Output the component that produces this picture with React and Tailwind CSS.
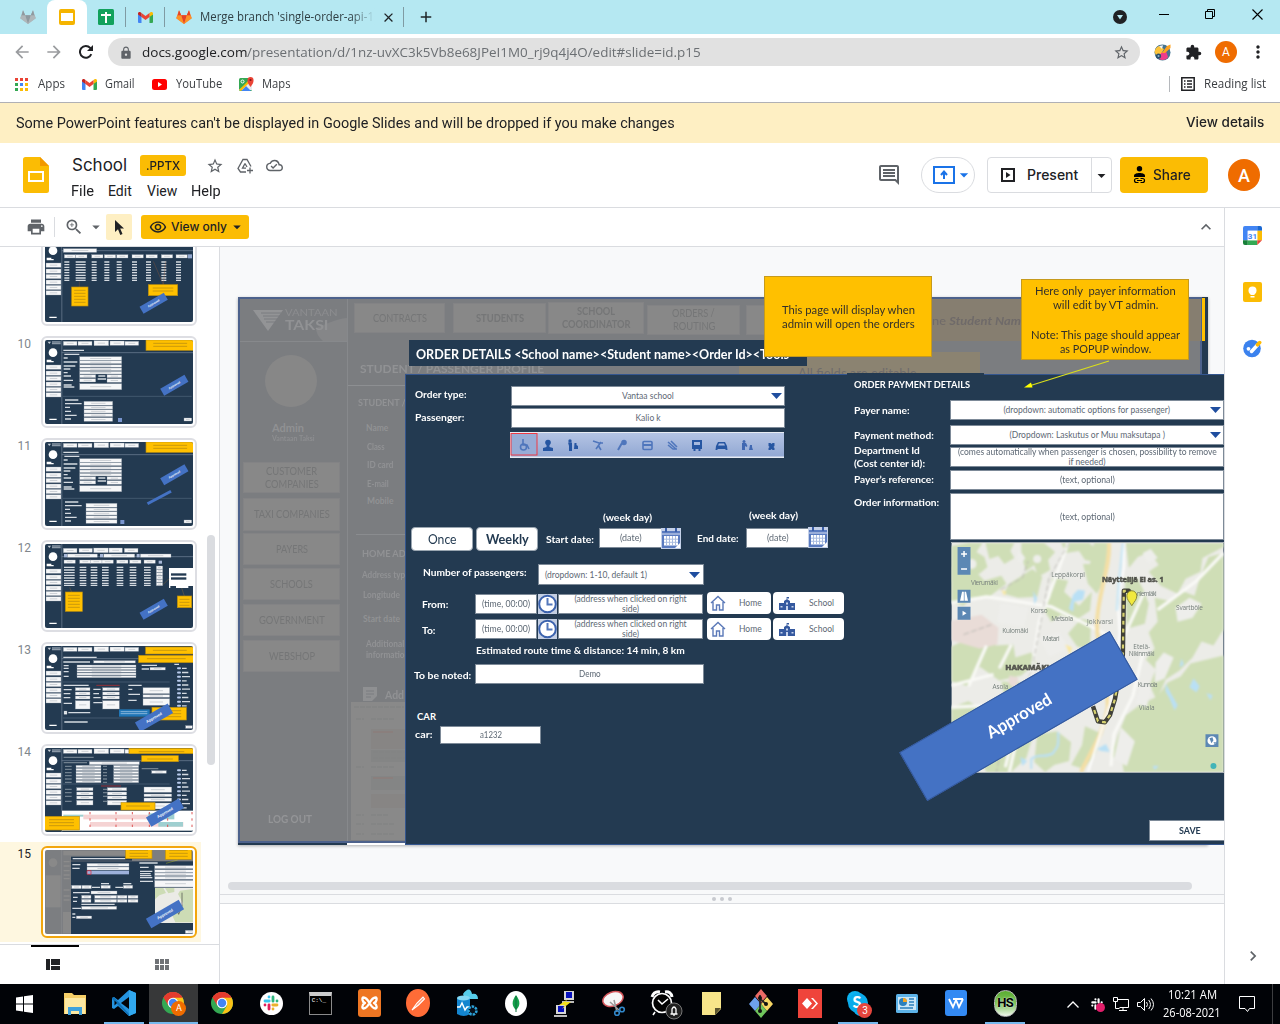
import React, { useLayoutEffect, useRef, useState } from "react";
import {
  MdPrint, MdZoomIn, MdArrowDropDown, MdOutlineRemoveRedEye, MdStarBorder,
  MdOutlineCloudDone, MdExtension, MdMoreVert, MdKeyboardArrowUp, MdLock,
  MdArrowBack, MdArrowForward, MdOutlineInsertComment, MdChevronRight, MdAdd, MdClose,
} from "react-icons/md";

/* A single line of text stretched or narrowed to an exact width. */
function Fit({ w, className = "", children }) {
  const ref = useRef(null);
  const [scale, setScale] = useState(1);
  useLayoutEffect(() => {
    const natural = ref.current.offsetWidth;
    if (natural) setScale(w / natural);
  }, [w]);
  return (
    <span className={"inline-block shrink-0 whitespace-nowrap " + className} style={{ width: w }}>
      <span ref={ref} className="inline-block origin-left whitespace-pre" style={{ transform: `scaleX(${scale})` }}>
        {children}
      </span>
    </span>
  );
}

/* Text object on the slide canvas, vertically centred on its top coordinate. */
function T({ w, className, children }) {
  return (
    <div className={"absolute flex -translate-y-1/2 leading-none " + className}>
      <Fit w={w}>{children}</Fit>
    </div>
  );
}

/* ---------- brand icons ---------- */

function Gitlab({ grey }) {
  const c = grey ? ["#8f9aa0", "#a5adb1", "#b4babd"] : ["#e24329", "#fc6d26", "#fca326"];
  return (
    <svg className="size-4 shrink-0" viewBox="0 0 16 16">
      <path d="M0.2 9.2 3 1.2l2.2 5h5.6l2.2-5 2.8 8L8 15z" fill={c[1]} />
      <path d="M5.2 6.2h5.6L8 15z" fill={c[0]} />
      <path d="M0.2 9.2 1.8 6.2h3.4L8 15zM15.8 9.2l-1.6-3h-3.4L8 15z" fill={c[2]} fillOpacity=".7" />
      <path d="M1.8 6.2 3 1.2l2.2 5zM14.2 6.2l-1.2-5-2.2 5z" fill={c[0]} />
    </svg>
  );
}

function Gmail() {
  return (
    <svg className="h-[11px] w-[15px]" viewBox="0 0 15 11">
      <path d="M0 2v8a1 1 0 0 0 1 1h2.500V4z" fill="#4285f4" />
      <path d="M15 2v8a1 1 0 0 1-1 1h-2.500V4z" fill="#34a853" />
      <path d="M11.500 1v4L15 2.600V1.500C15 .2 13.500-.4 12.500.3z" fill="#fbbc04" />
      <path d="M3.500 5V1l4 3 4-3v4l-4 3z" fill="#ea4335" />
      <path d="M0 1.500v1.100L3.500 5V1L2.500.3C1.500-.4 0 .2 0 1.500z" fill="#c5221f" />
    </svg>
  );
}

function ChromeLogo() {
  return (
    <svg className="size-6" viewBox="0 0 24 24">
      <circle cx="12" cy="12" r="11" fill="#34a853" />
      <path d="M12 12 2.500 6.500A11 11 0 0 1 21.500 6.500z" fill="#ea4335" />
      <path d="M12 6.500h9.500A11 11 0 0 1 12 23l5-8.500z" fill="#fbc116" />
      <path d="M2.500 6.500A11 11 0 0 1 21.500 6.500H12L7.200 14.500z" fill="#e33b2e" />
      <circle cx="12" cy="12" r="5.300" fill="#fff" />
      <circle cx="12" cy="12" r="4.200" fill="#4285f4" />
    </svg>
  );
}

/* Four rounded bars with their four satellite dots. */
function SlackMark({ className, mono }) {
  const c = mono ? ["#fff", "#fff", "#fff", "#fff"] : ["#36c5f0", "#2eb67d", "#ecb22e", "#e01e5a"];
  return (
    <svg className={className} viewBox="0 0 18 18" strokeWidth="2.800" strokeLinecap="round" fill="none">
      <path d="M3 7h4.200M7 3h.01" stroke={c[0]} />
      <path d="M11 3v4.200M15 7h.01" stroke={c[1]} />
      <path d="M15 11h-4.200M11 15h.01" stroke={c[2]} />
      <path d="M7 15v-4.200M3 11h.01" stroke={c[3]} />
    </svg>
  );
}

/* ---------- browser chrome ---------- */

function TabStrip() {
  return (
    <div className="flex h-[34px] items-stretch bg-[#b5e8f2]">
      <div className="flex w-[47px] items-center justify-center pl-[9px]"><Gitlab grey /></div>
      <div className="flex w-10 items-center justify-center rounded-t-lg bg-white">
        <div className="size-4 rounded-[2px] bg-[#f5b400] px-[2px] py-[4px]"><div className="h-2 w-3 bg-white" /></div>
      </div>
      <div className="flex w-[38px] items-center justify-center">
        <svg className="size-4" viewBox="0 0 16 16">
          <rect width="16" height="16" rx="1.500" fill="#12a15c" />
          <path d="M3 6h10M8 3v11" stroke="#fff" strokeWidth="2" />
        </svg>
      </div>
      <div className="my-[7px] w-px bg-[#7f9ba3]" />
      <div className="flex w-[38px] items-center justify-center"><Gmail /></div>
      <div className="my-[7px] w-px bg-[#7f9ba3]" />
      <div className="flex w-[238px] items-center pl-[11px]">
        <Gitlab />
        <div className="relative ml-[8px] flex w-[175px] font-['Open_Sans'] text-[12px] text-[#2f3e43]">
          <Fit w={174}>Merge branch 'single-order-api-1</Fit>
          <div className="absolute inset-y-0 right-0 w-[24px] bg-gradient-to-r from-transparent to-[#b5e8f2]" />
        </div>
        <MdClose className="ml-[6px] size-[15px] text-[#1f2427]" />
      </div>
      <div className="my-[7px] w-px bg-[#7f9ba3]" />
      <div className="flex w-[44px] items-center justify-center"><MdAdd className="size-[18px] text-[#1f2427]" /></div>
      <div className="flex-1" />
      <div className="flex items-center pb-[6px]">
        <svg className="mt-[6px] mr-[32px] size-[14px]" viewBox="0 0 14 14"><circle cx="7" cy="7" r="7" fill="#202124" /><path d="M4 5h6L7 9.500z" fill="#b5e8f2" /></svg>
        <svg className="mr-[36px] h-3 w-[10px]" viewBox="0 0 10 12"><path d="M0 6.500h10" stroke="#000" /></svg>
        <svg className="mr-[37px] size-[10px]" viewBox="0 0 10 10" fill="none" stroke="#000"><path d="M.5 2.500h7v7h-7zM2.500 2.500v-2h7v7h-2" /></svg>
        <svg className="mr-[17px] size-[11px]" viewBox="0 0 11 11"><path d="M.5.5l10 10M10.500.5l-10 10" stroke="#000" strokeWidth="1.100" /></svg>
      </div>
    </div>
  );
}

function AddressBar() {
  return (
    <div className="flex h-9 items-center font-['Open_Sans']">
      <MdArrowBack className="ml-[12px] size-5 text-[#9a9c9f]" />
      <MdArrowForward className="ml-[12px] size-5 text-[#9a9c9f]" />
      <svg className="ml-[15px] size-[14px]" viewBox="0 0 14 14"><path d="M12.300 9.200A5.900 5.900 0 1 1 11.200 2.900L12 3.800" fill="none" stroke="#202124" strokeWidth="2" /><path d="M14 0v6H8z" fill="#202124" /></svg>
      <div className="ml-[15px] flex h-7 w-[1032px] items-center rounded-full bg-[#e1e1e1] pt-px pr-[10px] pl-[11px] text-[13px]">
        <MdLock className="size-[14px] text-[#5f6368]" />
        <Fit w={105} className="ml-[9px] text-[#202124]">docs.google.com</Fit>
        <Fit w={454} className="text-[#6b6f73]">/presentation/d/1nz-uvXC3k5Vb8e68JPeI1M0_rj9q4j4O/edit#slide=id.p15</Fit>
        <div className="flex-1" />
        <MdStarBorder className="size-[17px] text-[#5f6368]" />
      </div>
      <svg className="ml-[14px] size-[17px]" viewBox="0 0 17 17">
        <circle cx="8.500" cy="8.500" r="8" fill="#467591" />
        <path d="M1 7C1 4 4 1 7 1l4 4-4 4z" fill="#3f6c8c" /><path d="M.5 8C1 5 3 2.500 5 2l5 3-3 5-5 1z" fill="#fdc43a" /><path d="M5 2 9 1.200 8 5z" fill="#f4f4f4" />
        <path d="M7 9l5-2 2 6c-1 2-4 3.500-6 3l-3-1z" fill="#ee3d8b" /><circle cx="4.500" cy="12" r="2.600" fill="#29506b" /><circle cx="4.500" cy="12" r="1" fill="#8fb2c8" />
        <path d="m8 9 5-7 3.500-1.500V4L11 9z" fill="#ffa21f" />
      </svg>
      <MdExtension className="ml-[14px] size-[17px] text-[#202124]" />
      <div className="ml-[13px] flex size-[22px] items-center justify-center rounded-full bg-[#ef6c00] font-[Roboto] text-[12px] text-white">A</div>
      <MdMoreVert className="ml-[11px] size-[20px] text-[#202124]" />
    </div>
  );
}

function Bookmarks() {
  const dots = ["bg-[#ea4335]", "bg-[#ea4335]", "bg-[#ea4335]", "bg-[#34a853]", "bg-[#4285f4]", "bg-[#fbbc04]", "bg-[#34a853]", "bg-[#fbbc04]", "bg-[#fbbc04]"];
  return (
    <div className="flex h-8 items-center border-b border-[#b0b0b5] pb-[5px] font-['Open_Sans'] text-[12px] text-[#3a3d41]">
      <div className="ml-[15px] grid grid-cols-3 gap-[2px]">{dots.map((c, i) => <i key={i} className={"size-[3px] " + c} />)}</div>
      <Fit w={27} className="ml-[10px]">Apps</Fit>
      <div className="ml-[17px] flex"><Gmail /></div>
      <Fit w={30} className="ml-[8px]">Gmail</Fit>
      <svg className="ml-[17px] h-[11px] w-[15px]" viewBox="0 0 15 11"><rect width="15" height="11" rx="2.500" fill="#f00" /><path d="M6 3v5l4-2.500z" fill="#fff" /></svg>
      <Fit w={46} className="ml-[9px]">YouTube</Fit>
      <svg className="ml-[17px] size-[15px]" viewBox="0 0 15 15">
        <rect y="1" width="13" height="13" rx="1.500" fill="#34a853" /><path d="M0 13 13 2v11z" fill="#e8eaed" />
        <path d="M2 14 7 9l5 5z" fill="#4285f4" /><path d="M0 13 9 4l1.500 1.500L2 14z" fill="#fbbc04" />
        <circle cx="3.500" cy="4.500" r="1.500" fill="none" stroke="#fff" />
        <path d="M11.500 10C9 6.500 8.500 5.500 8.500 3a3 3 0 0 1 6 0c0 2.500-.5 3.500-3 7z" fill="#ea4335" /><circle cx="11.500" cy="3" r="1.100" fill="#811" />
      </svg>
      <Fit w={29} className="ml-[8px]">Maps</Fit>
      <div className="flex-1" />
      <div className="h-4 w-px bg-[#b5b8bc]" />
      <svg className="ml-[11px] size-[14px]" viewBox="0 0 14 14" stroke="#202124" strokeWidth="1.500" fill="none"><path d="M.8.8h12.400v12.400H.8zM3 4h1.500M6 4h5M3 7h1.500M6 7h5M3 10h1.500M6 10h5" /></svg>
      <Fit w={62} className="mr-[14px] ml-[9px]">Reading list</Fit>
    </div>
  );
}

/* ---------- Slides header ---------- */

function Header() {
  return (
    <header className="flex h-[65px] border-b border-[#dadce0]">
      <svg className="mt-[14px] ml-[23px] h-9 w-[26px]" viewBox="0 0 26 36">
        <path d="M2.500 0H17l9 9v24.500a2.500 2.500 0 0 1-2.500 2.500h-21A2.500 2.500 0 0 1 0 33.500v-31A2.500 2.500 0 0 1 2.500 0z" fill="#fbbc04" />
        <path d="M17 0l9 9h-9z" fill="#f29900" /><path d="M6 15h14v9H6z" fill="none" stroke="#fff" strokeWidth="2" />
      </svg>
      <div className="ml-[22px] w-[231px]">
        <div className="mt-[11px] flex h-[23px] items-center pl-px">
          <Fit w={55} className="font-[Inter] text-[17px] text-[#202124]">School</Fit>
          <div className="ml-[13px] flex h-[21px] w-[46px] items-center justify-center rounded-[3px] bg-[#fbbc04] font-[Inter] text-[12px] font-medium text-[#202124]"><Fit w={34}>.PPTX</Fit></div>
          <MdStarBorder className="ml-[20px] size-[18px] text-[#5f6368]" />
          <svg className="ml-[13px] size-[16px]" viewBox="0 0 16 16" fill="none" stroke="#5f6368" strokeWidth="1.300">
            <path d="M9 14H3.500L1 10.500 6 1.500h4l4 7" /><path d="M8 5.500 5.500 10.200H9M8 5.500l2 3.500" /><path d="M13 9.500v6M10 12.500h6" />
          </svg>
          <MdOutlineCloudDone className="ml-[13px] size-[17px] text-[#5f6368]" />
        </div>
        <div className="mt-[3px] flex h-[22px] items-center font-[Roboto] text-[14px] text-[#202124]">
          <Fit w={23}>File</Fit><Fit w={24} className="ml-[14px]">Edit</Fit><Fit w={30} className="ml-[15px]">View</Fit><Fit w={30} className="ml-[14px]">Help</Fit>
        </div>
      </div>
      <div className="flex-1" />
      <div className="flex h-16 items-center font-[Inter] text-[14px] font-medium text-[#202124]">
        <MdOutlineInsertComment className="size-6 text-[#5f6368]" />
        <div className="ml-[20px] flex h-9 w-[54px] items-center justify-center rounded-full border border-[#dadce0] pl-[10px] text-[#1a73e8]">
          <svg className="h-[18px] w-[22px] shrink-0" viewBox="0 0 22 18" fill="none" stroke="#1a73e8" strokeWidth="2"><path d="M1 1h20v16H1zM11 13V6M8 9l3-3.500L14 9" /></svg>
          <MdArrowDropDown className="-ml-px size-[20px] shrink-0" />
        </div>
        <div className="ml-[12px] flex h-9 rounded-[4px] border border-[#dadce0]">
          <div className="flex w-[103px] items-center">
            <svg className="ml-[13px] size-[14px]" viewBox="0 0 14 14"><path d="M1 1h12v12H1z" fill="none" stroke="#202124" strokeWidth="2" /><path d="M5 4v6l4.500-3z" fill="#202124" /></svg>
            <Fit w={51} className="mb-[2px] ml-[12px]">Present</Fit>
          </div>
          <div className="flex w-[20px] items-center justify-center border-l border-[#dadce0]"><MdArrowDropDown className="size-[19px] shrink-0" /></div>
        </div>
        <div className="ml-[8px] flex h-9 w-[88px] items-center rounded-[4px] bg-[#fbbc04]">
          <svg className="ml-[13px] h-[18px] w-[13px]" viewBox="0 0 13 18"><circle cx="6.500" cy="2.800" r="2.700" /><path d="M1 11V9.500C1 6 12 6 12 9.500V11z" /><path d="M5.500 12.500h-2a2 2 0 0 0 0 4h2M7.500 12.500h2a2 2 0 0 1 0 4h-2M4 14.500h5" fill="none" stroke="#000" strokeWidth="1.200" /></svg>
          <Fit w={38} className="mb-[2px] ml-[7px]">Share</Fit>
        </div>
        <div className="mr-[20px] ml-[20px] flex size-8 items-center justify-center rounded-full bg-[#ef6c00] font-[Roboto] text-[18px] text-white">A</div>
      </div>
    </header>
  );
}

function Toolbar() {
  return (
    <div className="flex h-[39px] items-center border-b border-[#dadce0] bg-white">
      <MdPrint className="ml-[26px] size-5 text-[#5f6368]" />
      <div className="ml-[8px] h-5 w-px bg-[#dadce0]" />
      <MdZoomIn className="ml-[9px] size-[20px] text-[#5f6368]" />
      <MdArrowDropDown className="ml-[3px] size-[18px] text-[#5f6368]" />
      <div className="ml-[1px] flex size-[26px] items-center justify-center rounded-[2px] bg-[#feefc3]">
        <svg className="h-[15px] w-[11px]" viewBox="0 0 11 15"><path d="M1 0v12l3-2.800L6.300 15l2.200-1L6.200 8.500H10z" fill="#202124" /></svg>
      </div>
      <div className="ml-[9px] flex h-6 w-[108px] items-center rounded-[3px] bg-[#fbbc04] font-[Inter] text-[12px] font-medium text-[#202124]">
        <MdOutlineRemoveRedEye className="ml-[8px] size-[18px]" />
        <Fit w={56} className="ml-[4px]">View only</Fit>
        <MdArrowDropDown className="ml-[1px] size-[18px]" />
      </div>
      <div className="flex-1" />
      <MdKeyboardArrowUp className="mr-[8px] size-5 text-[#5f6368]" />
    </div>
  );
}

/* ---------- filmstrip ---------- */

const NAVY = "#233a51";
const Rects = ({ list, fill = "#fff" }) => list.map(([x, y, w, h], i) => <rect key={i} x={x} y={y} width={w} height={h} fill={fill} />);
const Lines = ({ list, stroke = "#d5dbe1", sw = 4 }) => list.map(([x, y, w], i) => <path key={i} d={`M${x} ${y}h${w}`} stroke={stroke} strokeWidth={sw} />);
const Fields = ({ list }) => (
  <>
    {list.map(([x, y, w, h], i) => (
      <g key={i}><rect x={x} y={y} width={w} height={h} fill="#f6f7f8" stroke="#8995a3" /><path d={`M${x + w * 0.25} ${y + h / 2}h${w * 0.5}`} stroke="#b9bfc6" strokeWidth="2" /></g>
    ))}
  </>
);
const Note = ({ x, y, w, h }) => (
  <g>
    <rect x={x} y={y} width={w} height={h} fill="#ffc000" stroke="#b98d10" strokeWidth="2" />
    {Array.from({ length: Math.max(1, Math.floor((h - 8) / 9)) }, (_, i) => <path key={i} d={`M${x + w * 0.15} ${y + 10 + i * 9}h${w * 0.7}`} stroke="#b08510" strokeWidth="2" />)}
  </g>
);
const Stamp = ({ x, y, s = 1 }) => (
  <g transform={`translate(${x} ${y}) rotate(-30) scale(${s})`}>
    <rect x="-42" y="-12" width="84" height="24" fill="#4472c4" />
    <text textAnchor="middle" y="3" fontFamily="Lato" fontWeight="700" fontSize="9" fill="#fff">Approved</text>
  </g>
);

function ThumbFrame({ children, tabs = true }) {
  return (
    <>
      <rect width="444" height="252" fill={NAVY} />
      <path d="M50.500 0v252M50 38h394" stroke="#75879a" strokeWidth="2" />
      <path d="M8 5h10l-5 7z" fill="#c8d0d8" /><Lines list={[[21, 6, 26], [21, 11, 26]]} stroke="#8b99a7" />
      <circle cx="24" cy="38" r="13" fill="#fff" />
      <Lines list={[[5, 61, 14], [5, 65, 21], [13, 238, 22]]} stroke="#fff" />
      <Fields list={[75, 93, 109, 126, 142, 158].map((y) => [3, y, 45, 13])} />
      {tabs && <Fields list={[[55, 4, 41, 12], [99, 4, 42, 12], [147, 2, 44, 15], [195, 3, 43, 13], [240, 4, 41, 12]]} />}
      {children}
    </>
  );
}

function Thumb9() {
  const cols = [58, 92, 140, 178, 215, 261, 303, 349, 393];
  return (
    <ThumbFrame tabs={false}>
      <rect x="52" y="0" width="392" height="36" fill={NAVY} />
      <Fields list={[[55, 32, 100, 11], ...cols.map((x) => [x, 50, 34, 10])]} />
      <Rects list={[[429, 49, 12, 12]]} fill="#93a8cf" />
      {cols.map((x, c) => <Lines key={c} list={[72, 80, 88, 96, 104, 112, 120, 127].map((y) => [x, y, c === 1 ? 30 : 15])} />)}
      <path d="M103 130v20M325 70l30 70M362 70l-7 70" stroke="#9b5b36" fill="none" />
      <Note x={80} y={147} w={49} h={57} /><Note x={310} y={140} w={88} h={33} /><Stamp x={326} y={196} />
    </ThumbFrame>
  );
}

function Thumb10({ alt }) {
  return (
    <ThumbFrame>
      <Lines list={[[55, 31, alt ? 46 : 62], [58, 43, 45]]} />
      <Lines list={[54, 66, 78, 87, 98, 108, 121, 135, 141].map((y, i) => [56, y, [12, 41, 35, 20, 12, 22, 28, 24, 32][i]])} />
      <Fields list={[[104, 50, 126, 11], [104, 62, 126, 9], [104, 74, 126, 8], [104, 84, 126, 8], [104, 94, 126, 8], [104, 104, 48, 9], [104, 116, 48, 10], [186, 104, 44, 9], [186, 116, 44, 11], [104, 131, 126, 18]]} />
      <Lines list={[[160, 108, 21], [158, 117, 25]]} />
      <path d="M54 169h386" stroke="#52677c" strokeWidth="2" />
      <Lines list={[[60, 180, 40], [60, 191, 50], [60, 202, 15], [60, 214, 18], [60, 226, 35], [60, 237, 18]]} />
      <Fields list={alt ? [[123, 184, 93, 12], [123, 198, 93, 9], [123, 209, 93, 10], [123, 221, 93, 9], [123, 233, 93, 11]] : [[117, 184, 86, 12], [117, 198, 86, 9], [117, 209, 86, 10], [117, 221, 86, 9], [117, 233, 86, 11]]} />
      <Rects list={[[alt ? 226 : 219, 234, 12, 12]]} fill="#7894ce" /><Fields list={[[417, 234, 23, 9]]} />
      <Note x={303} y={0} w={145} h={31} /><Stamp x={388} y={alt ? 98 : 136} />
      {alt && <g transform="translate(343 167) rotate(-28)"><rect x="-40" y="-5" width="80" height="9" fill="#4472c4" /></g>}
    </ThumbFrame>
  );
}

function Thumb12() {
  const cols = [57, 104, 137, 171, 215, 254, 297];
  return (
    <ThumbFrame tabs={false}>
      <Fields list={[[55, 13, 41, 13], [102, 13, 40, 12], [146, 12, 44, 14], [192, 12, 40, 14], [238, 13, 41, 12], [67, 30, 90, 10], [176, 30, 93, 10], [286, 30, 92, 10], ...cols.map((x) => [x, 48, 34, 10])]} />
      <Rects list={[[57, 30, 9, 10], [165, 30, 9, 10], [275, 30, 9, 10], [341, 50, 10, 9]]} fill="#a8b8d8" />
      {cols.map((x, c) => <Lines key={c} list={[70, 78, 86, 94, 102, 110, 118, 124].map((y) => [x, y, c ? 20 : 32])} />)}
      <Fields list={[66, 76, 86, 96, 106, 116].map((y) => [334, y, 19, 9])} />
      <Rects list={[[372, 72, 72, 60]]} /><Rects list={[[378, 88, 46, 7], [378, 100, 46, 7], [376, 126, 17, 6], [430, 126, 14, 6]]} fill={NAVY} />
      <path d="M74 130l6 15M410 132l8 24M354 122l18-18" stroke="#a47935" />
      <Note x={61} y={144} w={51} h={58} /><Note x={397} y={156} w={43} h={35} /><Stamp x={326} y={196} />
    </ThumbFrame>
  );
}

function Toggles() {
  return Array.from({ length: 10 }, (_, i) => (
    <g key={i}><rect x="396" y={64 + i * 12.5} width="12" height="6" rx="3" fill="#b9cbed" /><Lines list={[[411, 67 + i * 12.5, 14 + (i % 3) * 5]]} /></g>
  ));
}

function Thumb13() {
  return (
    <ThumbFrame>
      <Lines list={[[55, 34, 100], [55, 48, 80], [388, 55, 14]]} />
      <Fields list={[[146, 44, 125, 7], [96, 57, 177, 6], [96, 65, 177, 6], [96, 73, 177, 6], [96, 81, 177, 6], [96, 89, 177, 6]]} />
      <Lines list={[59, 67, 77, 91].map((y) => [56, y, 15])} />
      <Lines list={[[290, 58, 46], [290, 69, 22]]} /><Fields list={[[315, 64, 46, 8]]} />
      <path d="M54 108h320M54 216h355" stroke="#52677c" strokeWidth="2" />
      <Lines list={[[56, 118, 75], [250, 118, 40], [56, 131, 24], [56, 143, 20], [56, 155, 20], [56, 172, 25], [145, 130, 22], [145, 143, 17], [145, 155, 22], [145, 170, 28], [250, 130, 12], [250, 145, 35], [250, 163, 25], [70, 200, 66], [58, 228, 70]]} />
      <path d="M154 118h70" stroke="#d02a2a" strokeWidth="2" />
      <Fields list={[[91, 125, 44, 9], [91, 138, 44, 9], [91, 150, 44, 9], [91, 164, 44, 25], [173, 125, 50, 9], [173, 138, 50, 9], [173, 150, 50, 9], [173, 164, 50, 25], [294, 125, 80, 18], [294, 146, 80, 8], [294, 158, 80, 20], [57, 195, 9, 10], [422, 239, 20, 8]]} />
      <Toggles />
      <rect x="222" y="190" width="92" height="22" fill="#2076b7" /><Lines list={[[227, 197, 80], [227, 203, 80]]} stroke="#b9d4eb" sw={2} />
      <Note x={302} y={3} w={145} h={21} /><Note x={281} y={28} w={166} h={22} /><Note x={321} y={184} w={103} h={38} /><Stamp x={327} y={215} s={1.35} />
    </ThumbFrame>
  );
}

function Thumb14() {
  return (
    <ThumbFrame>
      <Lines list={[[56, 28, 90], [56, 44, 70], [290, 62, 50]]} stroke="#71818f" />
      <Fields list={[[133, 41, 150, 9], ...[52, 61, 70, 79, 88, 97].flatMap((y) => [[93, y, 75, 7], [206, y, 75, 7]]), ...[119, 132, 144].flatMap((y) => [[95, y, 49, 9], [187, y, 58, 9]]), [95, 157, 49, 14], [187, 157, 58, 14], [297, 117, 83, 16], [297, 138, 83, 8], [297, 150, 83, 10], [297, 165, 83, 18], [320, 68, 44, 8]]} />
      <Lines list={[55, 64, 74, 83, 93, 103, 124, 134, 145, 160].flatMap((y) => [[60, y, 20], [174, y, 12]])} stroke="#71818f" />
      <path d="M54 108h320" stroke="#52677c" strokeWidth="2" /><path d="M168 114h60" stroke="#d02a2a" strokeWidth="2" /><Toggles />
      <rect x="51" y="188" width="393" height="60" fill="#fff" /><Rects list={[[115, 200, 215, 14], [135, 222, 280, 14]]} fill="#f5d3d3" />
      <Rects list={[[310, 196, 78, 18], [55, 200, 60, 6], [340, 222, 74, 14]]} fill="#9fcfd0" />
      <path d="M135 192v56M213 192v56M262 192v56M313 192v56M368 192v56M441 192v56" stroke="#d55" strokeWidth="3" strokeDasharray="7 12" />
      <Note x={252} y={1} w={195} h={16} /><Note x={290} y={23} w={110} h={18} /><Note x={228} y={164} w={102} h={22} /><Note x={-4} y={205} w={107} h={41} /><Stamp x={360} y={194} s={1.35} />
    </ThumbFrame>
  );
}

function Thumb15() {
  return (
    <>
      <rect width="444" height="252" fill="#7c7e81" />
      <Rects list={[[2, 76, 45, 96], [55, 3, 188, 13], [54, 186, 24, 64]]} fill="#898989" /><circle cx="24" cy="38" r="13" fill="#898989" />
      <path d="M50 0v252" stroke="#8b8d90" strokeWidth="2" />
      <Lines list={[35, 48, 62, 75, 86, 120, 138, 150].map((y) => [56, y, 18])} stroke="#8b8b8b" />
      <rect x="78" y="20" width="183" height="12" fill={NAVY} /><rect x="78" y="34" width="366" height="218" fill={NAVY} />
      <Lines list={[[83, 26, 158], [82, 44, 24], [82, 55, 22], [168, 101, 24], [235, 101, 24], [141, 112, 24], [211, 112, 23], [84, 128, 50], [84, 142, 14], [84, 154, 12], [109, 163, 100], [82, 175, 27], [82, 192, 9], [82, 202, 9], [283, 39, 55], [285, 52, 26], [285, 64, 37], [285, 71, 32], [285, 77, 34], [285, 83, 37], [285, 94, 39]]} />
      <Fields list={[[126, 40, 126, 9], [126, 51, 126, 9], [80, 106, 29, 10], [111, 106, 28, 10], [168, 106, 28, 9], [235, 106, 28, 9], [138, 123, 78, 9], [110, 136, 28, 9], [149, 136, 66, 9], [217, 136, 29, 9], [249, 136, 30, 9], [110, 148, 28, 9], [149, 148, 66, 9], [217, 148, 29, 9], [249, 148, 30, 9], [110, 169, 105, 9], [94, 198, 46, 8], [329, 47, 125, 9], [329, 59, 125, 9], [329, 69, 125, 8], [329, 79, 125, 9], [329, 91, 125, 20], [421, 241, 30, 9]]} />
      <rect x="126" y="62" width="126" height="11" fill="#9db0da" /><path d="M126 62h12v11h-12z" fill="none" stroke="#d23" strokeWidth="2" />
      <rect x="330" y="113" width="114" height="106" fill="#ebebe6" /><path d="M330 114h25l8 15-20 7-13 12zM360 114h28v12l-18 4zM405 122l39-5v100h-53l-11-25 35-30-16-30zM338 194l25-10 4 20-25 6z" fill="#cddcb5" />
      <path d="M411 128v40l-10 25-5-12" fill="none" stroke="#444" strokeWidth="2" />
      <Note x={242} y={-9} w={79} h={35} /><Note x={361} y={-9} w={79} h={37} /><path d="M398 30l-35 10" stroke="#dd0" /><Stamp x={360} y={192} s={1.35} />
    </>
  );
}

function Film({ n, active, children }) {
  return (
    <div className={"flex h-[102px] shrink-0 items-start " + (active ? "bg-[linear-gradient(#fef7e0,#fef7e0)] bg-[length:201px_100px] bg-no-repeat" : "")}>
      <div className={"w-[41px] pt-[3px] pr-[10px] text-right font-[Roboto] text-[12px] " + (active ? "text-[#202124]" : "text-[#80868b]")}>{n}</div>
      <div className={"mt-[4px] rounded-[6px] border-2 bg-white p-[2px] " + (active ? "border-[#f2a60d]" : "border-[#dddee3]")}>
        <svg className="block h-[84px] w-[148px] rounded-[2px]" viewBox="0 0 444 252" preserveAspectRatio="none">{children}</svg>
      </div>
    </div>
  );
}

function Filmstrip() {
  return (
    <aside className="flex h-[737px] w-[220px] shrink-0 flex-col border-r border-[#dadce0] bg-white">
      <div className="flex h-[697px]">
        <div className="flex w-[201px] flex-col justify-end overflow-hidden">
          <Film n=""><Thumb9 /></Film>
          <Film n="10"><Thumb10 /></Film>
          <Film n="11"><Thumb10 alt /></Film>
          <Film n="12"><Thumb12 /></Film>
          <Film n="13"><Thumb13 /></Film>
          <Film n="14"><Thumb14 /></Film>
          <Film n="15" active><Thumb15 /></Film>
        </div>
        <div className="mt-[288px] ml-[6px] h-[230px] w-2 rounded-full bg-[#dadce0]" />
      </div>
      <div className="flex h-10 border-t border-[#dadce0]">
        <div className="ml-[31px] flex w-12 flex-col border-t-2 border-black pt-[12px] pl-[15px]">
          <svg className="h-[11px] w-[14px]" viewBox="0 0 14 11" fill="#202124"><path d="M0 0h4v11H0zM5 0h9v6H5zM5 7h9v4H5z" /></svg>
        </div>
        <svg className="mt-[14px] ml-[76px] h-[11px] w-[14px]" viewBox="0 0 14 11" fill="#6f7276"><path d="M0 0h4v5H0zM5 0h4v5H5zM10 0h4v5h-4zM0 6h4v5H0zM5 6h4v5H5zM10 6h4v5h-4z" /></svg>
      </div>
    </aside>
  );
}

/* ---------- slide canvas ---------- */

function Field({ className, children }) {
  return <div className={"absolute flex flex-col items-center justify-center overflow-hidden border border-[#7d8a98] bg-white text-[8.5px] leading-[10px] text-[#5d6874] " + className}>{children}</div>;
}
function Dim({ className, children }) {
  return <div className={"absolute flex flex-col items-center justify-center border border-[#838385] bg-[#888888] text-[10.5px] leading-[13px] text-[#757677] " + className}>{children}</div>;
}
function Caret({ className }) {
  return <svg className={"absolute h-[6px] w-[11px] " + className} viewBox="0 0 11 6"><path d="M0 0h11L5.500 6z" fill="#1f4e9f" /></svg>;
}
function Calendar({ className }) {
  return (
    <svg className={"absolute h-[21px] w-5 " + className} viewBox="0 0 20 21">
      <rect width="20" height="21" fill="#c4d0e8" /><path d="M1 3h18v17H1z" fill="#5a7bc0" /><path d="M3 8h14v9.500H3z" fill="#fff" />
      <path d="M5 0v4M15 0v4" stroke="#3b5ea8" strokeWidth="2" /><path d="M1 6h18" stroke="#dbe3f2" />
      <path d="M5.500 8v9.500M8.500 8v9.500M11.500 8v9.500M14.500 8v9.500M3 11.200h14M3 14.300h14" stroke="#a9bce0" /><path d="M14 20l5-5v5z" fill="#fff" />
    </svg>
  );
}
function Clock({ className }) {
  return <svg className={"absolute h-5 w-[19px] " + className} viewBox="0 0 19 20"><rect width="19" height="20" fill="#c3cee2" /><circle cx="9.500" cy="10" r="8.300" fill="#fff" stroke="#3b62ad" strokeWidth="2" /><path d="M9.500 4v6.500h5" fill="none" stroke="#5478bb" strokeWidth="2" /></svg>;
}
function PlaceButtons({ className }) {
  return (
    <div className={"absolute flex gap-[2px] text-[8.5px] text-[#5d6874] " + className}>
      <div className="flex h-[22px] w-[64px] items-center rounded-[4px] bg-white pl-[3px]">
        <svg className="size-[16px]" viewBox="0 0 16 16" fill="none" stroke="#5b79b8" strokeWidth="1.400"><path d="M1 8 8 1.500 15 8M3 7v8h3.500v-5h3v5H13V7" /></svg>
        <Fit w={23} className="ml-[13px]">Home</Fit>
      </div>
      <div className="flex h-[22px] w-[71px] items-center rounded-[4px] bg-white pl-[6px]">
        <svg className="h-[13px] w-[16px]" viewBox="0 0 16 13" fill="#35599f"><path d="M0 6h5v7H0zM11 6h5v7h-5zM5 4l3-2 3 2v9H5zM7.600 0h2.400v1.500H8.100V3h-.5z" /><path d="M7 9h2v4H7zM7 5.500h2v2H7zM1.500 9h2v1.500h-2zM12.500 9h2v1.500h-2z" fill="#c7d3ec" /></svg>
        <Fit w={25} className="ml-[14px]">School</Fit>
      </div>
    </div>
  );
}

function MobilityIcons() {
  return (
    <svg className="absolute top-[432px] left-[510px] h-[26px] w-[274px]" viewBox="0 0 274 26">
      <defs><linearGradient id="strip" x1="0" y1="0" x2="0" y2="1"><stop offset="0" stopColor="#b4c4e4" /><stop offset="1" stopColor="#92a8d3" /></linearGradient><filter id="faint"><feGaussianBlur stdDeviation="0.6" /></filter></defs>
      <rect width="274" height="26" fill="#e6ebf3" /><rect x="1" y="1" width="273" height="23.500" fill="url(#strip)" />
      <rect x="1" y="1.500" width="26" height="21.500" fill="#97acd6" stroke="#ee3a44" />
      <g filter="url(#faint)">
        <g fill="none" stroke="#4f76bc" strokeWidth="1.600">
          <circle cx="13.500" cy="15" r="3" /><path d="M13 7v6h4l2 4" />
          <path d="M83 9l6 2 4 0M91 10l-5 7M88 13l3 5" /><path d="M108 18l4-7" strokeWidth="2" /><circle cx="114" cy="10.500" r="2" fill="#4f76bc" />
          <rect x="133" y="9.500" width="9" height="8" rx="1" /><path d="M133 13h9" strokeWidth="2" />
          <path d="M158 10l8 7M161 9l6 6M158 13l5 4 4 0" />
        </g>
        <g fill="#2857a2">
          <circle cx="38" cy="10.500" r="2.800" /><path d="M36.500 12h3v3l3.500 1v3H33v-3l3.500-1z" />
          <circle cx="60" cy="9" r="1.700" /><path d="M58 10.500h4V19h-3v-5zM64.500 11h2v2l1.500 1v3h-4z" />
          <path d="M182 8h10v9h-1.500v2h-2v-2h-3v2h-2v-2H182z" /><path d="M184 10h6v3h-6z" fill="#a6b9df" />
          <path d="M206 14l2-4h7l2 4 .5 4h-2v-1h-8v1h-2z" /><path d="M209 11.500h5l1 2h-7z" fill="#a6b9df" />
          <g fill="#4068b2"><circle cx="234" cy="9.500" r="1.500" /><path d="M232 11h4l1.500 3-1 1-1.500-1v4h-3zM240 13h2v2l1 3h-4z" /></g>
          <path d="M258.500 11h2l1 1 1-1h2v3l-1 1 1 1v2h-2l-1-1-1 1h-2v-2l1-1-1-1z" />
        </g>
      </g>
    </svg>
  );
}

function RouteMap() {
  const names = [[33, 42, "Vierumäki", 27], [117, 34, "Leppäkorpi", 34], [88, 70, "Korso", 17], [111, 78, "Metsola", 22], [149, 81, "Jokivarsi", 26], [64, 90, "Kulomäki", 26], [100, 98, "Matari", 17], [239, 67, "Svartböle", 27], [196, 53, "niemiäki", 20], [191, 106, "Etelä-", 17], [191, 114, "Nikinmäki", 26], [197, 145, "Kunnola", 20], [196, 168, "Viiala", 16], [49, 147, "Asola", 16]];
  return (
    <svg className="absolute top-[542px] left-[951px] h-[231px] w-[273px] border-t border-b border-[#a9b0b4]" viewBox="0 0 273 230">
      <defs><filter id="soft"><feGaussianBlur stdDeviation="0.9" /></filter><filter id="softer"><feGaussianBlur stdDeviation="0.6" /></filter></defs>
      <rect width="273" height="230" fill="#ecece8" />
      <g filter="url(#soft)">
        <g fill="#cfdeb6">
          <path d="M0 3l17-3h14l-6 9 8 5 3 10-8 7-12 1-7 8-9-1zM34 0h29l-4 8 4 7-10 6-6-8-9 3zM70 0h23l11 9-7 8 2 10-12 7-4-12-8 6-5-15zM110 0h28l9 7-2 12-11-2-6-9-13 2zM143 0h14l-2 34-9 17-9-10-5-20 7 0z" />
          <path d="M175 0h98v4l-21 11-2 14-15 7-8 15-17-8-12-14 10-7-9-13-12 5-9 11z" />
          <path d="M174 35l13 1 6 12 5 13-4 20-18 5zM204 55l14 3 13-10 13 5 5-17 9-22 15-4v77l-10 16-12-4-9 16-13 13-14 9-9 21-7-15 6-16-10-10 9-11-6-16 9-11z" />
          <path d="M190 162l17-8 10-14 13-6 10-13 33-8v117H173l-3-19-11 7 8-25 8-20z" />
          <path d="M0 24h20l13 14 17-5 5 8-16 12-18 2-9 8-12-3zM58 41l23-15 10 8-5 20-19 1-15-4zM101 35l16 3-4 11 15 14 13-14-2 19-15 10-14-6-10 7-9-15 8-9zM130 76l10 2-1 29-13-3-9-13z" />
          <path d="M0 104l23-11 22 10 17-1 2 13 16-5 5 10-15 13-22 5-20-14-11 20-17-5zM0 165l17-6 18 11 20-9-5-22 19 1 13 14-9 17-24 12-11 16-14-7-24 8zM36 196l32-12 13 12-6 20-15 14H35l-7-15zM86 192l20-3 14 11-2 19-15 4-9 7-11-10zM134 184l16 7-5 20-12 16-13-4 11-20z" />
        </g>
        <path d="M0 78l30-6 17 13-1 17-18 4L0 98zM58 133l9 2-2 12-8-6z" fill="#e9dcd7" />
        <g fill="#eeeeeb"><circle cx="20" cy="21" r="5" /><circle cx="86" cy="16" r="4" /><path d="M68 7l6 8-4 6-5-6zM192 10l8-4 7 9-10 5zM205 120l8-10 10 5-9 21-10 4zM190 140l11 3-5 22-11-4zM225 65l14-10 12 6-9 14-15 4zM49 60l28 5-4 19-27-4zM88 95l20-5 10 16-20 8zM170 185l14 14-8 25-13-7z" /></g>
        <path d="M54 225l8-32-9-25M117 0l-12 33-17 46-9 59-21 92M0 165l60-3M0 60l35-6 65 10 58 29M35 103l-18 41M60 102l-12 24M0 143l42-11M160 224l3-32 19-38 10-43M193 50l-20 44M273 10l-27 28-39 29" fill="none" stroke="#fafaf7" strokeWidth="3" />
        <path d="M118 0 98 35 80 130 58 170 45 230M12 92l28-10M49 47l22-12 6-17" fill="none" stroke="#b7b6b0" strokeWidth="1" strokeDasharray="6 2" />
        <path d="M158 0c2 25-13 55-12 84 1 25 10 45 11 81-5 30-20 48-27 65" fill="none" stroke="#f4dfa5" strokeWidth="4" />
        <path d="M173 0v25l-6 35 2 31-10 71-22 68" fill="none" stroke="#fff" strokeWidth="2" />
        <path d="M118 66l4-14 5-5 7 1-2 9-9 2-1 10zM215 141l5 10 7 12-3 5-5-12-4-7zM239 145l4-9 6 8-3 6zM256 151l6 2-2 5zM231 116l2 6-4 3zM146 207l9-5 4 8-9-1zM69 215l7 4-5 5zM202 224l6 0-4 4zM82 48l4 8-3 6z" fill="#b9e0f5" />
        <path d="M107 190c1 18-2 15-5 21-9 6-14-1-22 6v10" fill="none" stroke="#b9e0f5" strokeWidth="2" />
        <path d="M172 0l-4 40-2 28" fill="none" stroke="#cce8f5" strokeWidth="2.500" />
        <path d="M114 102l7 3-2 7zM50 47l5 2-2 4z" fill="#fae89f" />
      </g>
      <g fontFamily="Open Sans" fontSize="6.500" fill="#77807d" textAnchor="middle" filter="url(#softer)">{names.map(([x, y, s, w]) => <text key={s} x={x} y={y} textLength={w}>{s}</text>)}</g>
      <g filter="url(#softer)">
        <path d="M181 52l-3-4h-5l-1 64-8 45-5 16-5 7-7-1-5-15" fill="none" stroke="#3f4039" strokeWidth="4.500" strokeLinejoin="round" />
        <path d="M181 52l-3-4h-5l-1 64-8 45-5 16-5 7-7-1-5-15" fill="none" stroke="#d8d270" strokeWidth="2.200" strokeDasharray="4 4" />
        <path d="M181 63c-3-5-5-6-5-10a5 5 0 0 1 10 0c0 4-2 5-5 10z" fill="#f1e93d" stroke="#8b8934" />
        <g fontFamily="Open Sans" fontWeight="700" fontSize="7.500" fill="#65665f" stroke="#454640" strokeWidth=".5"><text x="151" y="39" textLength="62">Näyttelijä El as. 1</text><text x="54" y="128" textLength="44" lengthAdjust="spacingAndGlyphs">HAKAMÄKI</text></g>
        <g fill="#5c88b4"><path d="M6 4h13v28H6zM6 47h13v13H6zM6 64h13v13H6zM255 192h13v13h-13z" /></g>
        <path d="M12.500 8v6M9.500 11h6M9.500 26h6" stroke="#fff" strokeWidth="1.500" /><path d="M8.500 58l2-9h1.800v9zM13 49h1.500l2 9H13zM11 68v5l4-2.500z" fill="#fff" />
        <circle cx="261.500" cy="198.500" r="4.500" fill="#fff" /><path d="M259 196l3-1 1 3-2 3zM263 200h3l-2 2z" fill="#5c88b4" /><circle cx="263" cy="224" r="3" fill="#43b4b8" />
      </g>
    </svg>
  );
}

function DimmedPage() {
  return (
    <>
      <div className="absolute top-[297px] left-[238px] h-[548px] w-[970px] bg-[#233a51] shadow-[0_1px_3px_rgba(0,0,0,.3)]" />
      <div className="absolute top-[842px] left-[347px] h-[3px] w-[60px] bg-white" />
      <div className="absolute top-[298px] left-[1201px] h-[43px] w-[4px] bg-[#ffc000]" />
      <div className="absolute top-[297px] left-[238px] h-[546px] w-[964px] border-2 border-[#4d628c] bg-[#7b7d80]" />
      <div className="absolute top-[299px] left-[347px] h-[542px] w-px bg-[#87898c]" />
      <div className="absolute top-[341px] left-[240px] h-px w-[107px] bg-[#87898c]" />
      <div className="absolute top-[385px] left-[348px] h-px w-[60px] bg-[#8d8f92]" />
      <div className="absolute top-[534px] left-[356px] h-px w-[52px] bg-[#8a8c8f]" />
      <svg className="absolute top-[308px] left-[252px] h-[33px] w-[95px]" viewBox="0 0 95 33"><path d="M64 20c8-3 20-9 31-10v23H71q-7-6-7-13z" fill="#858688" /><path d="M1 2h30L16 23z" fill="#939496" /><path d="M9 5h20M11 8h17M12 11h14M14 14h10" stroke="#7b7d80" /></svg>
      <T className="top-[312.5px] left-[285px] text-[9.5px] text-[#8c8d8f]" w={53}>VANTAAN</T>
      <T className="top-[325px] left-[285px] text-[14px] font-bold text-[#919294]" w={44}>TAKSI</T>
      <div className="absolute top-[355px] left-[265px] size-[52px] rounded-full bg-[#878787]" />
      <T className="top-[427px] left-[272px] text-[11px] font-bold text-[#909193]" w={32}>Admin</T>
      <T className="top-[439px] left-[272px] text-[7.5px] font-bold text-[#8d8e90]" w={43}>Vantaan Taksi</T>
      <Dim className="top-[462px] left-[243px] h-[31px] w-[97px]"><Fit w={51}>CUSTOMER</Fit><Fit w={54}>COMPANIES</Fit></Dim>
      <Dim className="top-[498px] left-[243px] h-[33px] w-[97px]"><Fit w={76}>TAXI COMPANIES</Fit></Dim>
      <Dim className="top-[533px] left-[243px] h-[32px] w-[97px]"><Fit w={32}>PAYERS</Fit></Dim>
      <Dim className="top-[568px] left-[243px] h-[32px] w-[97px]"><Fit w={43}>SCHOOLS</Fit></Dim>
      <Dim className="top-[604px] left-[243px] h-[32px] w-[97px]"><Fit w={66}>GOVERNMENT</Fit></Dim>
      <Dim className="top-[640px] left-[243px] h-[32px] w-[97px]"><Fit w={46}>WEBSHOP</Fit></Dim>
      <T className="top-[819px] left-[268px] text-[12px] font-bold text-[#949597]" w={44}>LOG OUT</T>
      <Dim className="top-[303px] left-[354px] h-[30px] w-[91px]"><Fit w={54}>CONTRACTS</Fit></Dim>
      <Dim className="top-[303px] left-[453px] h-[30px] w-[93px] font-bold"><Fit w={48}>STUDENTS</Fit></Dim>
      <Dim className="top-[302px] left-[548px] h-[32px] w-[96px] font-bold"><Fit w={38}>SCHOOL</Fit><Fit w={69}>COORDINATOR</Fit></Dim>
      <Dim className="top-[305px] left-[647px] h-[30px] w-[93px]"><Fit w={43}>ORDERS /</Fit><Fit w={42}>ROUTING</Fit></Dim>
      <Dim className="top-[305px] left-[746px] h-[30px] w-[93px]" />
      <div className="absolute top-[299px] left-[839px] h-[42px] w-[362px] bg-[#867e70]" />
      <div className="absolute top-[352px] left-[739px] h-[24px] w-[241px] bg-[#8b8371]" />
      <T className="top-[321px] left-[932px] text-[12px] font-bold text-[#6f6a69]" w={89}><span className="font-normal">ne </span><i>Student Nam</i></T>
      <T className="top-[373px] left-[798px] text-[13px] text-[#6f6c6c]" w={119}>All fields are editable</T>
      <div className="text-[#919294]">
        <T className="top-[369px] left-[360px] text-[12px] font-bold" w={184}>STUDENT / PASSENGER PROFILE</T>
        <T className="top-[402px] left-[358px] text-[10px] font-bold" w={48}>STUDENT /</T>
        <T className="top-[428px] left-[366px] text-[8.5px] font-bold" w={22}>Name</T>
        <T className="top-[447px] left-[367px] text-[8.5px] font-bold" w={18}>Class</T>
        <T className="top-[465px] left-[367px] text-[8.5px] font-bold" w={26}>ID card</T>
        <T className="top-[484px] left-[367px] text-[8.5px] font-bold" w={22}>E-mail</T>
        <T className="top-[501px] left-[367px] text-[8.5px] font-bold" w={26}>Mobile</T>
        <T className="top-[553px] left-[362px] text-[10px] font-bold" w={44}>HOME AD</T>
        <T className="top-[575px] left-[362px] text-[8.5px] font-bold" w={43}>Address typ</T>
        <T className="top-[595px] left-[363px] text-[8.5px] font-bold" w={37}>Longitude</T>
        <T className="top-[619px] left-[363px] text-[8.5px] font-bold" w={37}>Start date</T>
        <T className="top-[644px] left-[366px] text-[8.5px] font-bold" w={38}>Additional</T>
        <T className="top-[655px] left-[366px] text-[8.5px] font-bold" w={39}>informatio</T>
        <T className="top-[694px] left-[385px] text-[11px] font-bold" w={19}>Add</T>
      </div>
      <svg className="absolute top-[687px] left-[363px] size-[14px]" viewBox="0 0 14 14"><path d="M0 0h14v9l-5 5H0z" fill="#8f9092" /><path d="M3 4h8M3 7h8M3 10h5" stroke="#7b7d80" /></svg>
      <svg className="absolute top-[702px] left-[351px] h-[138px] w-[56px]" viewBox="0 0 56 138">
        <path d="M0 0h56v138H0z" fill="#898989" /><path d="M20 27h36v20H20zM20 92h36v14H20z" fill="#878584" /><path d="M20 48h36v12H20zM20 74h36v14H20z" fill="#848585" />
        <path d="M3 5h50M5 17h8M20 17h24M5 65h8M20 65h24M5 113h8M20 113h18M5 122h8M20 122h24M5 132h8M20 132h24M22 50h33M22 56h33" stroke="#838484" strokeWidth="1.500" strokeDasharray="5 1" /><path d="M22 30h20M22 76h20" stroke="#8c7d7b" strokeWidth="1.500" />
      </svg>
    </>
  );
}

function OrderDialog() {
  return (
    <div className="text-white">
      <div className="absolute top-[340px] left-[409px] h-[26px] w-[398px] bg-[#233a51]" />
      <T className="top-[353.500px] left-[416px] text-[13px] font-bold" w={373}>{"ORDER DETAILS <School name><Student name><Order Id><Tools"}</T>
      <div className="absolute top-[374px] left-[405px] h-[471px] w-[830px] border border-[#34568f] bg-[#233a51]" />
      <div className="absolute top-[373px] left-[847px] h-3 w-[137px] bg-[#233a51]" />

      <div className="text-[9.5px] font-bold">
        <T className="top-[395px] left-[415px]" w={52}>Order type:</T>
        <T className="top-[418px] left-[415px]" w={49}>Passenger:</T>
        <T className="top-[518px] left-[603px]" w={49}>(week day)</T>
        <T className="top-[516px] left-[749px]" w={49}>(week day)</T>
        <T className="top-[540px] left-[546px]" w={48}>Start date:</T>
        <T className="top-[539px] left-[697px]" w={42}>End date:</T>
        <T className="top-[573px] left-[423px]" w={104}>Number of passengers:</T>
        <T className="top-[605px] left-[422px]" w={26}>From:</T>
        <T className="top-[631px] left-[422px]" w={13}>To:</T>
        <T className="top-[651px] left-[476px]" w={209}>{"Estimated route time & distance: 14 min, 8 km"}</T>
        <T className="top-[676px] left-[414px]" w={57}>To be noted:</T>
        <T className="top-[717px] left-[417px]" w={19}>CAR</T>
        <T className="top-[735px] left-[415px]" w={17}>car:</T>
        <T className="top-[385px] left-[854px]" w={116}>ORDER PAYMENT DETAILS</T>
        <T className="top-[411px] left-[854px]" w={56}>Payer name:</T>
        <T className="top-[436px] left-[854px]" w={80}>Payment method:</T>
        <T className="top-[451px] left-[854px]" w={66}>Department Id</T>
        <T className="top-[464px] left-[854px]" w={71}>(Cost center id):</T>
        <T className="top-[480px] left-[854px]" w={80}>Payer’s reference:</T>
        <T className="top-[503px] left-[854px]" w={85}>Order information:</T>
      </div>

      <Field className="top-[386px] left-[511px] h-[20px] w-[274px]"><Fit w={52}>Vantaa school</Fit></Field>
      <Caret className="top-[393px] left-[771px]" />
      <Field className="top-[408px] left-[511px] h-[20px] w-[274px]"><Fit w={25}>Kalio k</Fit></Field>
      <MobilityIcons />
      <div className="absolute top-[527px] left-[411px] flex h-6 w-[62px] items-center justify-center rounded-[4px] border border-[#9aa6b1] bg-white pt-[2px] text-[13px] text-[#233a51]"><Fit w={29}>Once</Fit></div>
      <div className="absolute top-[527px] left-[476px] flex h-6 w-[62px] items-center justify-center rounded-[4px] border border-[#9aa6b1] bg-white pt-[2px] text-[13px] font-bold text-[#233a51]"><Fit w={43}>Weekly</Fit></div>
      <Field className="top-[528px] left-[599px] h-[20px] w-[63px]"><Fit w={22}>(date)</Fit></Field>
      <Calendar className="top-[528px] left-[661px]" />
      <Field className="top-[528px] left-[746px] h-[20px] w-[63px]"><Fit w={22}>(date)</Fit></Field>
      <Calendar className="top-[527px] left-[808px]" />
      <Field className="top-[564px] left-[538px] h-[21px] w-[166px] items-start pl-[6px]"><Fit w={102}>(dropdown: 1-10, default 1)</Fit></Field>
      <Caret className="top-[572px] left-[689px]" />
      <Field className="top-[594px] left-[475px] h-[20px] w-[62px]"><Fit w={48}>(time, 00:00)</Fit></Field>
      <Clock className="top-[594px] left-[538px]" />
      <Field className="top-[594px] left-[558px] h-[20px] w-[145px]"><Fit w={112}>(address when clicked on right</Fit><Fit w={17}>side)</Fit></Field>
      <PlaceButtons className="top-[592px] left-[707px]" />
      <Field className="top-[619px] left-[475px] h-[20px] w-[62px]"><Fit w={48}>(time, 00:00)</Fit></Field>
      <Clock className="top-[619px] left-[538px]" />
      <Field className="top-[619px] left-[558px] h-[20px] w-[145px]"><Fit w={112}>(address when clicked on right</Fit><Fit w={17}>side)</Fit></Field>
      <PlaceButtons className="top-[618px] left-[707px]" />
      <Field className="top-[664px] left-[475px] h-[20px] w-[229px]"><Fit w={22}>Demo</Fit></Field>
      <Field className="top-[726px] left-[440px] h-[18px] w-[101px]"><Fit w={22}>a1232</Fit></Field>

      <Field className="top-[400px] left-[950px] h-[20px] w-[274px]"><Fit w={167}>(dropdown: automatic options for passenger)</Fit></Field>
      <Caret className="top-[407px] left-[1210px]" />
      <Field className="top-[425px] left-[950px] h-[20px] w-[274px]"><Fit w={155}>(Dropdown: Laskutus or Muu maksutapa )</Fit></Field>
      <Caret className="top-[432px] left-[1210px]" />
      <Field className="top-[447px] left-[950px] h-[20px] w-[274px]"><Fit w={259}>(comes automatically when passenger is chosen, possibility to remove</Fit><Fit w={37}>if needed)</Fit></Field>
      <Field className="top-[470px] left-[950px] h-[20px] w-[274px]"><Fit w={55}>(text, optional)</Fit></Field>
      <Field className="top-[493px] left-[950px] h-[47px] w-[274px] pt-[1px]"><Fit w={55}>(text, optional)</Fit></Field>
      <RouteMap />
      <Field className="top-[820px] left-[1149px] h-[21px] w-[82px] font-bold text-[#233a51]"><Fit w={22}>SAVE</Fit></Field>
    </div>
  );
}

function SlideCanvas() {
  return (
    <div className="relative h-[632px] overflow-hidden">
      <div className="absolute -top-[247px] -left-[220px] h-[1024px] w-[1280px] font-[Lato]">
        <DimmedPage />
        <OrderDialog />
        <div className="absolute top-[688px] left-[897px] flex h-[56px] w-[243px] -rotate-30 items-center justify-center border border-[#35599c] bg-[#4472c4] text-[17px] font-bold text-white"><Fit w={72}>Approved</Fit></div>
        <div className="absolute top-[276px] left-[764px] flex h-[81px] w-[168px] flex-col items-center justify-center border border-[#c69a1c] bg-[#ffc000] text-[12px] leading-[14px] text-[#33302a]">
          <Fit w={133}>This page will display when</Fit><Fit w={133}>admin will open the orders</Fit>
        </div>
        <div className="absolute top-[279px] left-[1021px] flex h-[81px] w-[168px] flex-col items-center border border-[#c69a1c] bg-[#ffc000] pt-[4px] text-[12px] leading-[14px] text-[#33302a]">
          <Fit w={141}>Here only  payer information</Fit><Fit w={105}>will edit by VT admin.</Fit>
          <Fit w={149} className="mt-[16px]">Note: This page should appear</Fit><Fit w={91}>as POPUP window.</Fit>
        </div>
        <svg className="absolute top-[360px] left-[1023px] h-[30px] w-[88px]" viewBox="0 0 88 30"><path d="M86 1 6 26" stroke="#d9de1b" strokeWidth="1.300" /><path d="M1 27.500l7-5 1.500 5z" fill="#ff0" /></svg>
      </div>
    </div>
  );
}

function Workspace() {
  return (
    <main className="flex w-[1004px] flex-col bg-[#f8f9fa]">
      <SlideCanvas />
      <div className="mt-[3px] ml-[8px] h-2 w-[964px] rounded-full bg-[#dadce0]" />
      <div className="mt-[4px] flex h-[10px] items-center justify-center gap-[4px] border-y border-[#dadce0]">
        <i className="size-1 rounded-full bg-[#c8cacf]" /><i className="size-1 rounded-full bg-[#c8cacf]" /><i className="size-1 rounded-full bg-[#c8cacf]" />
      </div>
      <div className="flex-1 bg-white" />
    </main>
  );
}

function SidePanel() {
  return (
    <aside className="flex w-14 flex-col items-center border-l border-[#dadce0] bg-white pt-[18px]">
      <svg className="size-[19px]" viewBox="0 0 20 20">
        <path d="M2 0h13v5H5v10H0V2q0-2 2-2z" fill="#4285f4" /><path d="M15 0h3q2 0 2 2v3h-5z" fill="#1967d2" /><path d="M15 5h5v10h-5z" fill="#fbbc04" /><path d="M5 15h10v5H5z" fill="#34a853" /><path d="M0 15h5v5H2q-2 0-2-2z" fill="#188038" /><path d="M15 15h5l-5 5z" fill="#ea4335" /><path d="M5 5h10v10H5z" fill="#fff" />
        <text x="10" y="13.200" textAnchor="middle" fontFamily="Roboto" fontWeight="700" fontSize="8.500" fill="#4285f4">31</text>
      </svg>
      <svg className="mt-[37px] h-5 w-[19px]" viewBox="0 0 19 20"><rect width="19" height="20" rx="2" fill="#fbbc04" /><circle cx="9.500" cy="8.500" r="4" fill="#fff" /><path d="M7.500 11h4v2h-4zM7.500 14h4v1.500h-4z" fill="#fff" /></svg>
      <svg className="mt-[36px] h-5 w-[19px]" viewBox="0 0 19 20"><circle cx="9" cy="10.500" r="8.800" fill="#3b82ee" /><circle cx="5.500" cy="10.800" r="1.900" fill="#fff" /><path d="M8.500 13.500 14.500 7" stroke="#fff" strokeWidth="3.500" strokeLinecap="round" /><path d="M14.500 6.800l2.200-2.300" stroke="#ffba00" strokeWidth="3.500" strokeLinecap="round" /></svg>
      <div className="flex-1" />
      <MdChevronRight className="mb-[18px] size-5 text-[#5f6368]" />
    </aside>
  );
}

/* ---------- taskbar ---------- */

const taskIcons = [
  <svg className="h-[23px] w-[22px]" viewBox="0 0 22 23"><path d="M0 1h8l2 2h12v19H0z" fill="#f6cf67" /><path d="M1 6h20v16H1z" fill="#fde9a2" /><path d="M4 23v-8h14v8h-3v-4H7v4z" fill="#3fa2dc" /></svg>,
  <svg className="h-[28px] w-6" viewBox="0 0 24 26"><path d="M17 0l7 3v20l-7 3L6 16l-4 3-2-1V8l2-1 4 3z" fill="#2493df" /><path d="M17 7v12l-8-6z" fill="#030509" /><path d="M0 8l2-1 15 17v2L0 9z" fill="#1072b8" /><path d="M2.500 10.500v5L5 13z" fill="#030509" /><path d="M17 0l7 3v20l-7 3z" fill="#31a8ee" /></svg>,
  <div className="relative"><ChromeLogo /><div className="absolute top-[10px] left-[10px] flex size-[15px] items-center justify-center rounded-full bg-[#ef6c00] text-[9px] text-white">A</div></div>,
  <ChromeLogo />,
  <div className="flex size-[23px] items-center justify-center rounded-full bg-white"><SlackMark className="size-[18px]" /></div>,
  <div className="h-[23px] w-[23px] border border-t-4 border-[#8a8a8a] border-t-[#ccc] bg-black pl-[2px] font-['Liberation_Mono'] text-[6px] leading-[10px] text-white">C:\_</div>,
  <svg className="h-[28px] w-[23px]" viewBox="0 0 23 28"><rect width="23" height="28" rx="3" fill="#ee7623" /><path d="M5.500 8.500q-1.500 0-1 2.500.3 2 2.500 3-2.200 1-2.500 3-.5 2.500 1 2.500 3 0 6-5.500 3-5.500 6-5.500 1.500 0 1 2.500-.3 2-2.500 3 2.200 1 2.500 3 .5 2.500-1 2.500-3 0-6-5.500-3-5.500-6-5.500z" fill="none" stroke="#fff" strokeWidth="2.300" strokeLinejoin="round" /></svg>,
  <svg className="h-[28px] w-6" viewBox="0 0 24 28"><ellipse cx="12" cy="14" rx="12" ry="14" fill="#ff6c37" /><path d="M6 21l5-7 6-6 1.500 2-6 6z" fill="#ff9b77" stroke="#fff" strokeWidth="1.100" /></svg>,
  <svg className="h-[28px] w-6" viewBox="0 0 24 28"><path d="M8 5c4-6 8-6 9 0 4-1 6 1 6 5H10z" fill="#56cdea" /><path d="M2 9h13v16q-6 4-13 0z" fill="#1385cf" /><ellipse cx="8.500" cy="9" rx="6.500" ry="2.500" fill="#83d9f4" /><path d="M2 18h3l2-4 3 7 2-3h3" fill="none" stroke="#fff" strokeWidth="1.400" /><circle cx="17.500" cy="21.500" r="4" fill="#07101a" stroke="#2da4dc" strokeWidth="2.500" strokeDasharray="2.500 1" /></svg>,
  <svg className="h-[25px] w-[22px]" viewBox="0 0 22 25"><ellipse cx="11" cy="12.500" rx="11" ry="12.500" fill="#fff" /><path d="M11 4c5 7 4 11 0 15-4-4-5-8 0-15z" fill="#14a04b" /><path d="M11 5v16" stroke="#0b703a" /></svg>,
  <svg className="h-[27px] w-[23px]" viewBox="0 0 23 27"><path d="M11 1h10v9H11zM3 15h10v9H3z" fill="#d6d6d6" /><path d="M13 2h6v6h-6zM5 16h6v6H5z" fill="#0711bd" /><path d="M9 11h12v2H9zM1 25h13v2H1z" fill="#bbb" /><path d="M15 9l-9 6h6l-3 4 9-7h-6z" fill="#f3df1e" /></svg>,
  <svg className="h-[27px] w-6" viewBox="0 0 24 27"><ellipse cx="11" cy="9" rx="10.500" ry="7" transform="rotate(-20 11 9)" fill="#f6f6f6" stroke="#d25459" strokeWidth="1.500" /><path d="M8 12l9 8M12 10l3 12" stroke="#999" strokeWidth="1.500" /><circle cx="15" cy="23" r="2.300" fill="none" stroke="#3188ca" strokeWidth="1.600" /><circle cx="20" cy="19.500" r="2.300" fill="none" stroke="#3188ca" strokeWidth="1.600" /></svg>,
  <svg className="h-[30px] w-[34px] translate-x-[4px] translate-y-[2px]" viewBox="0 0 34 30"><path d="M2 7q2-6 8-5M15 2q6-1 7 5" fill="none" stroke="#fff" strokeWidth="3" /><circle cx="12" cy="13" r="9.500" fill="#020202" stroke="#fff" strokeWidth="1.700" /><path d="M5 22l-2 3M8 10l4 4 6-5" fill="none" stroke="#fff" strokeWidth="1.600" /><circle cx="24" cy="21" r="8" fill="#202020" stroke="#777" /><path d="M20.500 24h7M22 24v-5q2-4 4 0v5M24 24v2" fill="none" stroke="#fff" strokeWidth="1.300" /></svg>,
  <svg className="h-[23px] w-[19px]" viewBox="0 0 19 23"><path d="M0 0h19v17l-6 6H0z" fill="#f7e58a" /><path d="M13 16h6l-6 7z" fill="#5a532f" /></svg>,
  <svg className="h-[29px] w-6" viewBox="0 0 24 29"><path d="M12 0l6 7-6 7-6-7z" fill="#eb6b66" /><path d="M6 8l6 7-6 7-6-7z" fill="#6ea2ed" /><path d="M18 8l6 7-6 7-6-7z" fill="#f6d665" /><path d="M12 15l6 7-6 7-6-7z" fill="#71c65d" /><path d="M11 6v17M11 10l6 5" stroke="#272727" strokeWidth="1.800" /><circle cx="11" cy="9" r="2" fill="#111" /><circle cx="11" cy="22" r="2" fill="#111" /><circle cx="17" cy="15" r="2" fill="#111" /></svg>,
  <svg className="h-[29px] w-6" viewBox="0 0 24 29"><path d="M0 0h24v29H0z" fill="#ef443b" /><path d="M9 9l5 5.500-5 5.500-5-5.500zM13 9l2 0 5 5.500-5 5.500h-2l5-5.500z" fill="#fff" /></svg>,
  <div className="relative"><svg className="h-[25px] w-[22px]" viewBox="0 0 22 25"><circle cx="8" cy="8" r="8" fill="#0cb3f0" /><circle cx="14" cy="17" r="8" fill="#0cb3f0" /><circle cx="11" cy="12" r="10" fill="#0aabeb" /><text x="10" y="17" textAnchor="middle" fontFamily="Lato" fontWeight="900" fontSize="16" fill="#fff">S</text></svg><div className="absolute top-[12px] left-[10px] flex size-[15px] items-center justify-center rounded-full bg-[#e5453d] text-[10px] text-white">3</div></div>,
  <svg className="h-[19px] w-[22px]" viewBox="0 0 22 19"><rect width="22" height="19" rx="1.500" fill="#5db3e8" /><path d="M2 3h18v13H2z" fill="#cbe7f7" /><circle cx="7" cy="8" r="4" fill="#2b80bd" /><path d="M7 8V4a4 4 0 0 1 4 4z" fill="#f6a622" /><path d="M13 5h5M13 8h5M13 11h5M4 14h13" stroke="#2b80bd" strokeWidth="1.500" /></svg>,
  <svg className="h-[26px] w-[22px]" viewBox="0 0 22 26"><rect width="22" height="26" rx="3" fill="#338af3" /><path d="M4 9l4 8 3-7 3 7 4-8M8 9h10" fill="none" stroke="#fff" strokeWidth="1.800" /></svg>,
  <div className="flex h-[27px] w-[23px] items-center justify-center rounded-full border border-[#bbb] bg-gradient-to-b from-[#5aad30] via-[#7cc257] to-[#f2f8ee] font-[Roboto] text-[13px] font-bold tracking-tighter text-black"><span className="[text-shadow:0_0_2px_#fff]">HS</span></div>,
];

function Taskbar() {
  return (
    <footer className="flex h-10 bg-[#010307] font-[Roboto]">
      <div className="flex w-[51px] shrink-0 items-center justify-center pr-[3px]"><svg className="h-[18px] w-[17px]" viewBox="0 0 17 18" fill="#fff"><path d="M0 2.500 7 1.500V8.500H0zM8 1.300 17 0v8.500H8zM0 9.500h7v7L0 15.500zM8 9.500h9V18l-9-1.200z" /></svg></div>
      {taskIcons.map((icon, i) => (
        <div key={i} className={"flex h-10 w-[48.950px] shrink-0 flex-col items-center " + (i === 2 ? "bg-[#373839]" : "")}>
          <div className="flex h-[38px] items-center">{icon}</div>
          <div className={"h-[2px] " + (i === 2 ? "w-full bg-[#76b9ed]" : [1, 16, 19].includes(i) ? "w-10 bg-[#76b9ed]" : "w-10")} />
        </div>
      ))}
      <div className="flex-1" />
      <div className="flex items-center">
        <svg className="h-[7px] w-3" viewBox="0 0 12 7"><path d="M.5 6.500 6 1l5.500 5.500" fill="none" stroke="#fff" strokeWidth="1.300" /></svg>
        <div className="relative ml-[11px] size-[15px]"><SlackMark mono className="size-[14px]" /><div className="absolute top-[6px] left-[6px] size-[9px] rounded-full bg-[#e01e6a]" /></div>
        <svg className="ml-[8px] size-[16px]" viewBox="0 0 16 16" fill="none" stroke="#fff"><path d="M4.500 3.500h11v8h-9M10 11.500v3M6 14.500h8M.5 1.500h4v4h-4zM2.500 5.500v7h4" /></svg>
        <svg className="ml-[8px] h-[15px] w-[17px]" viewBox="0 0 17 15" fill="none" stroke="#fff"><path d="M.5 5.500h3l4-4v12l-4-4h-3zM9.500 5q2 2.500 0 5M11.700 3q3.500 4.500 0 9M14 1.500q5 6 0 12" /></svg>
      </div>
      <div className="ml-[9px] flex w-[58px] flex-col items-center pt-[2px] font-['Open_Sans'] text-[12px] leading-[18px] text-white"><Fit w={49}>10:21 AM</Fit><Fit w={58}>26-08-2021</Fit></div>
      <svg className="mt-[12px] mr-[17px] ml-[18px] h-[17px] w-4" viewBox="0 0 16 17"><path d="M.5.5h15v12h-5l-2 3-2.500-3H.5z" fill="none" stroke="#fff" /></svg>
      <div className="mr-[7px] w-px bg-[#3c3d40]" />
    </footer>
  );
}

export default function App() {
  return (
    <div className="flex h-[1024px] w-[1280px] flex-col overflow-hidden bg-white">
      <TabStrip />
      <AddressBar />
      <div className="flex h-[33px] flex-col justify-end"><Bookmarks /></div>
      <div className="flex h-10 items-center justify-between bg-[#feefc3] px-4 text-[14px] text-[#202124]">
        <Fit w={659} className="font-[Roboto]">Some PowerPoint features can't be displayed in Google Slides and will be dropped if you make changes</Fit>
        <Fit w={78} className="font-[Inter] text-[13px] font-medium">View details</Fit>
      </div>
      <Header />
      <div className="flex h-[776px]">
        <div className="flex w-[1224px] flex-col">
          <Toolbar />
          <div className="flex h-[737px]"><Filmstrip /><Workspace /></div>
        </div>
        <SidePanel />
      </div>
      <Taskbar />
    </div>
  );
}
